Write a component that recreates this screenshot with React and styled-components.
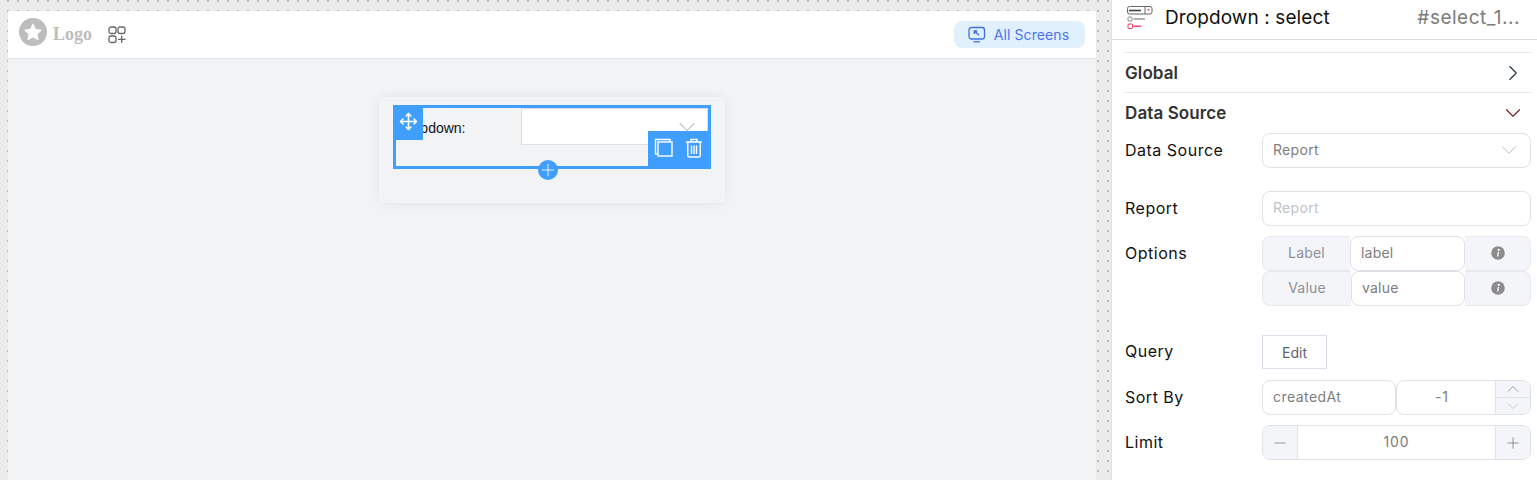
import React from "react";
import styled, { createGlobalStyle } from "styled-components";
import { ChevronDown, ChevronRight, ChevronUp, Minus, Move, Plus } from "lucide-react";

const GlobalStyle = createGlobalStyle`
  html, body {
    margin: 0;
    height: 480px;
    overflow: hidden;
    background: #fff;
    font-family: Inter, "Liberation Sans", sans-serif;
  }
  * {
    box-sizing: border-box;
  }
`;

const LogoMark = () => (
  <svg width="28" height="28" viewBox="0 0 28 28">
    <circle cx="14" cy="14" r="14" fill="#bdbdbd" />
    <path
      d="M14 6.500l2.400 5 5.400.7-4 3.700 1 5.400-4.800-2.600-4.800 2.600 1-5.400-4-3.700 5.400-.7z"
      fill="#fff"
      stroke="#fff"
      strokeWidth="1.400"
      strokeLinejoin="round"
    />
  </svg>
);

const AppsAdd = () => (
  <svg width="18" height="18" viewBox="0 0 18 18" fill="none" stroke="#666" strokeWidth="1.300">
    <rect x="1" y="1" width="7" height="6.500" rx="2" />
    <rect x="10" y="1" width="7" height="6.500" rx="2" />
    <rect x="1" y="10" width="7" height="6.500" rx="2" />
    <path d="M10 13.300h7.500M13.700 9.800v7.200" />
  </svg>
);

const ScreenIcon = () => (
  <svg width="18" height="18" viewBox="0 0 18 18" fill="none" stroke="#3f6fe8" strokeWidth="1.300">
    <rect x="1" y="1.500" width="15.500" height="11.500" rx="2.500" />
    <path d="M5.500 15.800h6.500" />
    <path d="M6.500 5l4.500 4.200M6.300 8V5h3" strokeWidth="1.400" />
  </svg>
);

const WidgetIcon = () => (
  <svg width="26" height="26" viewBox="0 0 26 26" fill="none">
    <rect x="0.500" y="0.500" width="24.500" height="7.500" rx="2" stroke="#666" />
    <path d="M18 0.500v7.500" stroke="#666" />
    <path d="M2 4.500h12" stroke="#444" strokeWidth="1.600" />
    <path d="M20 3.200h3l-1.500 2z" fill="#e8436b" />
    <rect x="1" y="11" width="4" height="4" rx="1" stroke="#888" />
    <path d="M6.500 13h11.500" stroke="#888" strokeWidth="1.300" />
    <rect x="1" y="18" width="4.500" height="4.500" rx="1" stroke="#f0335f" />
    <path d="M6.500 20.200h8" stroke="#f0335f" strokeWidth="1.300" />
  </svg>
);

const CopyIcon = () => (
  <svg width="20" height="20" viewBox="0 0 20 20" fill="none" stroke="#fff" strokeWidth="1.400">
    <rect x="4" y="4" width="14" height="14" />
    <path d="M4 16H1.500V1.500H16V4" />
  </svg>
);

const TrashIcon = () => (
  <svg width="18" height="20" viewBox="0 0 18 20" fill="none" stroke="#fff" strokeWidth="1.400">
    <path d="M1 4h16M6 4V1.500h6V4" />
    <path d="M2.800 4v13.500a1.500 1.500 0 0 0 1.500 1.500h9.400a1.500 1.500 0 0 0 1.500-1.500V4" />
    <path d="M6.500 7.500v8.500M9 7.500v8.500M11.500 7.500v8.500" />
  </svg>
);

const InfoIcon = () => (
  <svg width="14" height="14" viewBox="0 0 14 14">
    <circle cx="7" cy="7" r="6.800" fill="#8c8c8c" />
    <circle cx="7.700" cy="3.900" r="1.100" fill="#fff" />
    <path d="M6.900 6h1.300l-.9 4.500H6z" fill="#fff" />
  </svg>
);

const Page = styled.div`
  display: flex;
  width: 1537px;
  height: 480px;
`;

// dotted grid: two covering stripes leave a 2x2 dot in each 10px tile
const Workspace = styled.div`
  width: 1111px;
  height: 480px;
  padding: 11px 15px 0 8px;
  background-color: #bdbdbd;
  background-image: linear-gradient(to right, #ebebeb 8px, transparent 8px),
    linear-gradient(to bottom, #ebebeb 8px, transparent 8px);
  background-size: 10px 10px;
  background-position: 9px 2px;
`;

const Canvas = styled.div`
  height: 469px;
  display: flex;
  flex-direction: column;
  background: #f2f3f5;
`;

const TopBar = styled.header`
  height: 48px;
  flex: none;
  display: flex;
  align-items: center;
  justify-content: space-between;
  padding: 0 11px;
  background: #fff;
  border-bottom: 1px solid #e2e3e6;
`;

const Brand = styled.div`
  display: flex;
  align-items: center;
  margin-top: -5px;
`;

const LogoText = styled.span`
  margin: 4px 16px 0 6px;
  font-family: "Liberation Serif", serif;
  font-size: 18px;
  font-weight: 700;
  color: #bdbdbd;
`;

const AppsSlot = styled.span`
  display: flex;
  margin-top: 6px;
`;

const ScreensButton = styled.button`
  width: 131px;
  height: 27px;
  display: flex;
  align-items: center;
  justify-content: center;
  gap: 8px;
  padding: 0 2px 0 0;
  border: none;
  border-radius: 8px;
  background: #e1f0fd;
  color: #4c74f0;
  font-family: inherit;
  font-size: 14px;
  letter-spacing: 0.1px;
`;

const Stage = styled.main`
  flex: 1;
  display: flex;
  justify-content: center;
  align-items: flex-start;
  padding-top: 38px;
  padding-right: 1px;
`;

const Card = styled.section`
  width: 346px;
  height: 106px;
  padding: 8px 14px;
  border-radius: 6px;
  background: #f2f3f5;
  box-shadow: 0 0 12px rgba(0, 0, 0, 0.07);
`;

const Selected = styled.div`
  position: relative;
  width: 318px;
  height: 64px;
  border: 3px solid #409eff;
`;

const DropdownRow = styled.div`
  display: flex;
  align-items: flex-start;
  justify-content: space-between;
  font-family: "Liberation Sans", sans-serif;
  font-size: 14px;
  color: #111;
`;

const DropdownLabel = styled.label`
  width: 125px;
  height: 37px;
  line-height: 40px;
  text-align: right;
  padding-right: 55px;
  white-space: nowrap;
`;

const DropdownBox = styled.div`
  width: 187px;
  height: 37px;
  display: flex;
  justify-content: flex-end;
  align-items: center;
  padding-right: 6px;
  background: #fff;
  border: 1px solid #dcdfe6;
  color: #c8c8c8;
`;

const MoveHandle = styled.div`
  position: absolute;
  left: -3px;
  top: -3px;
  width: 30px;
  height: 35px;
  display: flex;
  justify-content: center;
  padding: 7px 0 0 1px;
  background: #409eff;
  color: #fff;
`;

const Actions = styled.div`
  position: absolute;
  right: -3px;
  bottom: -3px;
  width: 63px;
  height: 38px;
  display: flex;
  align-items: flex-start;
  gap: 11px;
  padding: 7px 0 0 6px;
  background: #409eff;
`;

const AddButton = styled.div`
  position: absolute;
  left: 142px;
  bottom: -14px;
  width: 20px;
  height: 20px;
  display: flex;
  align-items: center;
  justify-content: center;
  border-radius: 50%;
  background: #409eff;
  color: #fff;
`;

const Panel = styled.aside`
  width: 426px;
  height: 480px;
  flex: none;
  background: #fff;
  border-left: 1px solid #e0e0e0;
`;

const PanelHeader = styled.div`
  height: 40px;
  display: flex;
  align-items: center;
  padding: 0 17px 1px 15px;
  border-bottom: 1px solid #dcdcdc;
`;

const PanelTitle = styled.h1`
  flex: 1;
  margin: 0 0 3px 12px;
  font-size: 19px;
  font-weight: 400;
  color: #111;
  letter-spacing: 0.1px;
`;

const PanelId = styled.span`
  margin-bottom: 3px;
  font-size: 19px;
  color: #7b7b7b;
  letter-spacing: 0.5px;
`;

const PanelBody = styled.div`
  padding: 12px 5px 0 13px;
`;

const SectionHead = styled.div`
  height: ${(p) => p.$height}px;
  display: flex;
  align-items: center;
  justify-content: space-between;
  padding-right: 6px;
  border-top: 1px solid #e8eaf0;
  font-size: 17px;
  font-weight: 600;
  color: #333;
  letter-spacing: 0.1px;
`;

const Row = styled.div`
  display: flex;
  align-items: ${(p) => (p.$top ? "flex-start" : "center")};
  margin-bottom: ${(p) => p.$after || 0}px;
`;

const RowLabel = styled.div`
  width: 137px;
  flex: none;
  font-size: 16px;
  color: #111;
  line-height: 35px;
  letter-spacing: 0.5px;
`;

const Field = styled.div`
  width: 269px;
  height: 35px;
  display: flex;
  align-items: center;
  justify-content: space-between;
  padding: 0 8px 2px 10px;
  border: 1px solid #dfe1e6;
  border-radius: 8px;
  font-size: 14px;
  letter-spacing: 0.3px;
  color: ${(p) => (p.$placeholder ? "#c0c3c9" : "#7d7d7d")};
`;

const OptionList = styled.div`
  display: flex;
  flex-direction: column;
`;

const OptionRow = styled.div`
  width: 269px;
  height: 35px;
  display: flex;
`;

const OptionTag = styled.div`
  width: ${(p) => p.$width}px;
  flex: none;
  display: flex;
  align-items: center;
  justify-content: center;
  padding-bottom: 2px;
  background: #f4f5f9;
  border: 1px solid #e8e9ee;
  border-radius: 8px 0 0 8px;
  border-right: none;
  font-size: 14px;
  letter-spacing: 0.2px;
  color: #8d919a;
`;

const OptionInput = styled.div`
  flex: 1;
  display: flex;
  align-items: center;
  padding: 0 0 2px 10px;
  background: #fff;
  border: 1px solid #dfe1e6;
  border-radius: 8px;
  font-size: 14px;
  letter-spacing: 0.2px;
  color: #7d7d7d;
`;

const OptionInfo = styled.div`
  width: 66px;
  flex: none;
  display: flex;
  align-items: center;
  justify-content: center;
  padding-bottom: 2px;
  background: #f4f5f9;
  border: 1px solid #e8e9ee;
  border-left: none;
  border-radius: 0 8px 8px 0;
`;

const EditButton = styled.button`
  width: 65px;
  height: 34px;
  padding: 1px 0 0;
  background: #fff;
  border: 1px solid #dcdfe9;
  font-family: inherit;
  font-size: 14px;
  color: #5f6470;
`;

const SortKey = styled(Field)`
  width: 134px;
  letter-spacing: 0.45px;
`;

const SortOrder = styled.div`
  width: 135px;
  height: 35px;
  display: flex;
  border: 1px solid #dfe1e6;
  border-radius: 8px;
  overflow: hidden;
  font-size: 14px;
  color: #7d7d7d;
`;

const SortValue = styled.div`
  flex: 1;
  display: flex;
  align-items: center;
  justify-content: center;
  padding: 0 8px 2px 0;
  letter-spacing: 1px;
`;

const Stepper = styled.div`
  width: 35px;
  display: flex;
  flex-direction: column;
  background: #f4f5f9;
  border-left: 1px solid #dfe1e6;
`;

const Step = styled.div`
  flex: 1;
  min-height: 0;
  display: flex;
  align-items: center;
  justify-content: center;
  color: ${(p) => (p.$muted ? "#c4c7ce" : "#8d919a")};
  border-top: ${(p) => (p.$muted ? "1px solid #dfe1e6" : "none")};
`;

const Counter = styled.div`
  width: 269px;
  height: 35px;
  display: flex;
  border: 1px solid #dfe1e6;
  border-radius: 8px;
  overflow: hidden;
  font-size: 14px;
  color: #7d7d7d;
`;

const CounterButton = styled.div`
  width: 35px;
  flex: none;
  display: flex;
  align-items: center;
  justify-content: center;
  background: #f4f5f9;
  color: #777;
  border-left: ${(p) => (p.$end ? "1px solid #dfe1e6" : "none")};
  border-right: ${(p) => (p.$end ? "none" : "1px solid #dfe1e6")};
`;

const CounterValue = styled.div`
  flex: 1;
  display: flex;
  align-items: center;
  justify-content: center;
  padding-bottom: 2px;
  letter-spacing: 0.8px;
`;

export default function App() {
  return (
    <Page>
      <GlobalStyle />
      <Workspace>
        <Canvas>
          <TopBar>
            <Brand>
              <LogoMark />
              <LogoText>Logo</LogoText>
              <AppsSlot>
                <AppsAdd />
              </AppsSlot>
            </Brand>
            <ScreensButton>
              <ScreenIcon />
              All Screens
            </ScreensButton>
          </TopBar>
          <Stage>
            <Card>
              <Selected>
                <DropdownRow>
                  <DropdownLabel>Dropdown:</DropdownLabel>
                  <DropdownBox>
                    <ChevronDown size={28} strokeWidth={1} />
                  </DropdownBox>
                </DropdownRow>
                <MoveHandle>
                  <Move size={19} strokeWidth={2} />
                </MoveHandle>
                <Actions>
                  <CopyIcon />
                  <TrashIcon />
                </Actions>
                <AddButton>
                  <Plus size={20} strokeWidth={1} />
                </AddButton>
              </Selected>
            </Card>
          </Stage>
        </Canvas>
      </Workspace>
      <Panel>
        <PanelHeader>
          <WidgetIcon />
          <PanelTitle>Dropdown : select</PanelTitle>
          <PanelId>#select_1...</PanelId>
        </PanelHeader>
        <PanelBody>
          <SectionHead $height={40}>
            Global
            <ChevronRight size={26} strokeWidth={1} color="#234" />
          </SectionHead>
          <SectionHead $height={41}>
            Data Source
            <ChevronDown size={26} strokeWidth={1} color="#7a1f1f" />
          </SectionHead>
          <Row $after={23}>
            <RowLabel>Data Source</RowLabel>
            <Field>
              Report
              <ChevronDown size={26} strokeWidth={0.9} color="#b8bcc4" />
            </Field>
          </Row>
          <Row $after={10}>
            <RowLabel>Report</RowLabel>
            <Field $placeholder>Report</Field>
          </Row>
          <Row $top $after={28}>
            <RowLabel>Options</RowLabel>
            <OptionList>
              <OptionRow>
                <OptionTag $width={88}>Label</OptionTag>
                <OptionInput>label</OptionInput>
                <OptionInfo>
                  <InfoIcon />
                </OptionInfo>
              </OptionRow>
              <OptionRow>
                <OptionTag $width={89}>Value</OptionTag>
                <OptionInput>value</OptionInput>
                <OptionInfo>
                  <InfoIcon />
                </OptionInfo>
              </OptionRow>
            </OptionList>
          </Row>
          <Row $after={11}>
            <RowLabel>Query</RowLabel>
            <EditButton>Edit</EditButton>
          </Row>
          <Row $after={10}>
            <RowLabel>Sort By</RowLabel>
            <SortKey>createdAt</SortKey>
            <SortOrder>
              <SortValue>-1</SortValue>
              <Stepper>
                <Step>
                  <ChevronUp size={20} strokeWidth={1} />
                </Step>
                <Step $muted>
                  <ChevronDown size={20} strokeWidth={1} />
                </Step>
              </Stepper>
            </SortOrder>
          </Row>
          <Row>
            <RowLabel>Limit</RowLabel>
            <Counter>
              <CounterButton>
                <Minus size={18} strokeWidth={1} />
              </CounterButton>
              <CounterValue>100</CounterValue>
              <CounterButton $end>
                <Plus size={18} strokeWidth={1} />
              </CounterButton>
            </Counter>
          </Row>
        </PanelBody>
      </Panel>
    </Page>
  );
}
